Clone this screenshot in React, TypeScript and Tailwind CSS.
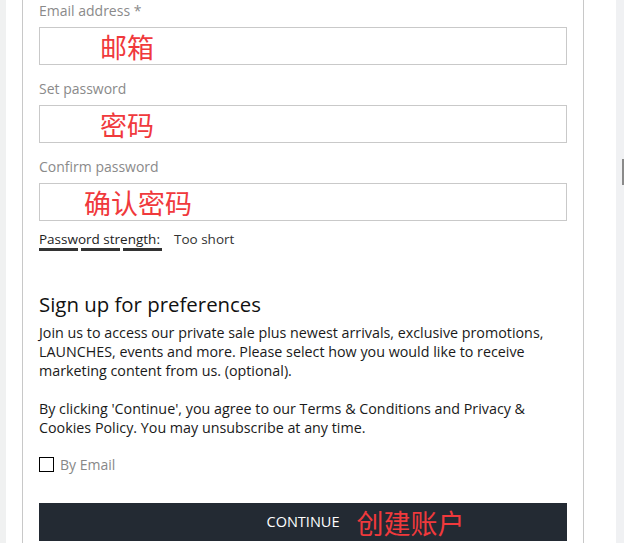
const font = { fontFamily: '"Open Sans", "Noto Sans CJK SC", sans-serif' };
const cjk = { fontFamily: '"Noto Sans CJK SC", sans-serif' };

function Field({ label, note, indent }: { label: string; note: string; indent: string }) {
  return (
    <div>
      <div className="mb-[6px] text-[14px] leading-[20px] text-[#8a8a8a]">{label}</div>
      <div className="flex h-[38px] items-center border border-[#c9c9c9] bg-white">
        <span className={`${indent} text-[27px] leading-none text-[#f0393c]`} style={cjk}>
          {note}
        </span>
      </div>
    </div>
  );
}

export default function App() {
  return (
    <div className="flex h-[543px] w-[624px] overflow-hidden bg-white" style={font}>
      <div className="w-[6px] shrink-0 bg-[#f0f1f1]" />
      <div className="w-[16px] shrink-0" />
      <div className="w-[562px] shrink-0 border-x border-[#c8c8c8] px-[16px] pt-px">
        <div className="flex flex-col gap-[14px]">
          <Field label="Email address *" note="邮箱" indent="ml-[60px]" />
          <Field label="Set password" note="密码" indent="ml-[60px]" />
          <Field label="Confirm password" note="确认密码" indent="ml-[44px]" />
        </div>

        <div className="mt-[10px] flex items-start gap-[12px] text-[13.5px] leading-[17px] text-[#222]">
          <div className="flex flex-col">
            <span>Password strength:</span>
            <div className="flex gap-[3px]">
              <span className="h-[3px] w-[39px] bg-[#333]" />
              <span className="h-[3px] w-[39px] bg-[#333]" />
              <span className="h-[3px] w-[39px] bg-[#333]" />
            </div>
          </div>
          <span className="text-[#333]">Too short</span>
        </div>

        <h2 className="mt-[39px] text-[20.4px] leading-[28px] text-[#111]">Sign up for preferences</h2>
        <div className="mt-[5px] whitespace-nowrap text-[14.3px] leading-[19px] text-[#1a1a1a]">
          <p>
            Join us to access our private sale plus newest arrivals, exclusive promotions,
            <br />
            LAUNCHES, events and more. Please select how you would like to receive
            <br />
            marketing content from us. (optional).
          </p>
          <p className="mt-[19px]">
            By clicking 'Continue', you agree to our Terms &amp; Conditions and Privacy &amp;
            <br />
            Cookies Policy. You may unsubscribe at any time.
          </p>
        </div>

        <label className="mt-[17px] flex h-[20px] items-center gap-[6px]">
          <span className="h-[15px] w-[15px] border border-black bg-white" />
          <span className="text-[14px] text-[#888]">By Email</span>
        </label>

        <button className="mt-[29px] flex h-[38px] w-full items-center justify-center bg-[#232a33]">
          <span className="relative text-[14.5px] leading-none text-white">
            CONTINUE
            <span
              className="absolute left-full top-1/2 ml-[17px] -translate-y-1/2 whitespace-nowrap text-[27px] text-[#f0393c]"
              style={cjk}
            >
              创建账户
            </span>
          </span>
        </button>
      </div>
      <div className="w-[32px] shrink-0" />
      <div className="relative w-[8px] shrink-0 bg-[#f0f1f3]">
        <div className="absolute right-0 top-[159px] h-[26px] w-[2px] bg-[#8a8a8a]" />
      </div>
    </div>
  );
}
